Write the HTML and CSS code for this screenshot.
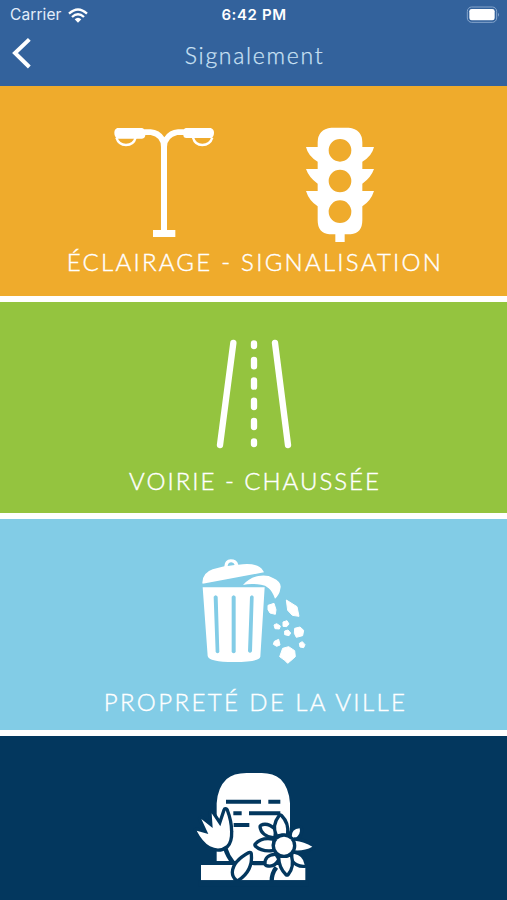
FILE: index.html
```html
<!DOCTYPE html>
<html lang="fr">
<head>
<meta charset="utf-8">
<title>Signalement</title>
<link rel="stylesheet" href="styles.css">
</head>
<body>
<header class="header">
  <div class="status">
    <div class="carrier"><span>Carrier</span>
      <svg class="wifi" viewBox="0 0 60 45" aria-hidden="true"><g fill="none" stroke="#fff" stroke-width="7"><path d="M3 17Q30-8 57 17"/><path d="M12 27Q30 10 48 27"/></g><path d="M20 34Q30 25 40 34L30 44Z" fill="#fff"/></svg>
    </div>
    <div class="time">6:42 PM</div>
    <svg class="battery" viewBox="0 0 102 54" aria-hidden="true"><rect x="4" y="3" width="88" height="46" rx="13" fill="none" stroke="#86a5cc" stroke-width="3"/><rect x="10" y="9" width="76" height="34" rx="7" fill="#fff"/><path d="M96 20Q102 26 96 32Z" fill="#86a5cc"/></svg>
  </div>
  <nav class="nav">
    <svg class="back" viewBox="0 0 60 96" aria-hidden="true"><path d="M52 7L9 48L52 90" fill="none" stroke="#fff" stroke-width="12"/></svg>
    <h1 class="title">Signalement</h1>
  </nav>
</header>
<main class="list">
  <section class="card lighting">
    <div class="icons">
      <svg class="lamp" viewBox="0 0 390 390" aria-hidden="true"><g fill="#fff"><path d="M52 39H124Q130 39 132 43H152Q179 45 193 67Q207 45 234 43H252Q254 39 260 39H332Q342 42 342 53Q342 65 334 69H259Q250 69 250 60H232Q201 68 201 96V345H226V366H159V345H183V96Q183 66 152 60H136Q136 69 126 71H52Q43 65 43 53Q43 42 52 39Z"/></g><g fill="none" stroke="#fff" stroke-width="7"><path d="M49 68Q56 90 78 90Q101 90 107 68"/><path d="M279 68Q285 90 307 90Q330 90 337 68"/></g></svg>
      <svg class="signal" viewBox="0 0 300 405" aria-hidden="true"><path fill="#fff" fill-rule="evenodd" d="M124 38H176Q217 43 217 82V96H252Q246 123 217 140V162H252Q243 188 217 206V228H252Q243 257 217 274V316Q217 355 182 358H164V381H136V358H118Q83 355 83 316V274Q57 257 48 228H83V206Q57 188 48 162H83V140Q54 123 48 96H83V82Q83 43 124 38ZM184 106A34 34 0 1 0 116 106A34 34 0 1 0 184 106ZM184 198A34 34 0 1 0 116 198A34 34 0 1 0 184 198ZM184 290A34 34 0 1 0 116 290A34 34 0 1 0 184 290Z"/></svg>
    </div>
    <h2 class="label">ÉCLAIRAGE - SIGNALISATION</h2>
  </section>
  <section class="card road">
    <svg class="lanes" viewBox="0 0 330 375" aria-hidden="true"><g fill="none" stroke="#fff" stroke-width="19" stroke-linecap="round"><path d="M100 39L60 345M225 39L264 345"/><path d="M162 40V48M162 90V109M162 151V170M162 212V231M162 273V291M162 334V342"/></g></svg>
    <h2 class="label">VOIRIE - CHAUSSÉE</h2>
  </section>
  <section class="card clean">
    <svg class="bin" viewBox="0 0 390 360" aria-hidden="true"><g fill="#fff"><path fill-rule="evenodd" d="M38 112H224L211 320Q207 336 132 336Q57 336 53 318ZM71 140L77 306Q83 314 88 306L83 140Q77 131 71 140ZM125 140V306Q131 314 137 306V140Q131 131 125 140ZM180 140L174 304Q180 313 186 304L191 140Q186 131 180 140Z"/><path d="M37 98Q38 68 68 58L103 49Q104 29 122 28Q141 28 145 44Q182 39 202 47Q217 54 222 67L38 101ZM113 48L134 45Q132 37 124 37Q114 38 113 48Z" fill-rule="evenodd"/><path d="M159 105Q178 83 205 78Q233 74 249 84Q277 97 271 116Q269 133 255 146Q247 124 236 115Q226 105 213 104Q181 99 159 105Z"/></g><path fill="#fff" stroke="#fff" stroke-width="3" stroke-linejoin="round" d="M234 166L252 160L258 179L256 193L240 189L234 179ZM289 150L321 170L327 199L307 196L293 181ZM279 216L291 212L297 222L290 230L279 229ZM252 225L260 221L271 228L268 237L255 236ZM284 243L294 240L302 249L297 257L284 254ZM314 235L330 231L341 241L338 257L319 262L313 250ZM253 274L266 268L270 285L260 289L250 283ZM328 280L337 275L345 284L341 293L330 291ZM278 295L296 290L314 302L316 320L306 329L293 340L284 331L269 320Z"/></svg>
    <h2 class="label">PROPRETÉ DE LA VILLE</h2>
  </section>
  <section class="card green-space">
    <svg class="flowers" viewBox="0 0 420 405" aria-hidden="true">
      <path fill="#fff" d="M95 288V115Q98 67 125 42Q145 24 185 24H230Q265 24 287 43Q312 68 315 115V288ZM48 300H361V346H48Z"/>
      <path d="M123 110H228M250 110H286M145 145H170M192 145H286M146 180H193M205 295H240" fill="none" stroke="#03375e" stroke-width="12"/>
      <path d="M120 248Q128 274 144 293M274 307Q260 325 260 348" fill="none" stroke="#03375e" stroke-width="13"/>
      <path class="petal" d="M35 197L70 207L49 162L83 189L80 145L106 184L122 136Q135 170 135 200Q136 228 124 241Q103 258 75 244Q52 230 35 197Z"/>
      <path class="petal" d="M194 267Q148 292 147 322Q147 334 157 342Q199 315 194 267Z"/>
      <path class="petal" d="M265 213Q233 208 230 185Q246 177 267 196Z"/>
      <path class="petal" d="M320 216Q319 192 344 190Q349 207 329 222Z"/>
      <path class="petal" d="M270 273Q243 275 245 297Q266 303 276 283Z"/>
      <path class="petal" d="M326 266Q354 270 359 299Q337 301 323 282Z"/>
      <path class="petal" d="M278 208Q266 181 286 155Q307 176 303 207Q290 204 278 208Z"/>
      <path class="petal" d="M262 227Q230 222 215 240Q231 255 262 252Q258 240 262 227Z"/>
      <path class="petal" d="M329 227Q358 230 382 245Q359 258 329 256Q333 241 329 227Z"/>
      <path class="petal" d="M286 278Q287 306 306 325Q323 304 315 275Q300 281 286 278Z"/>
      <circle class="petal" cx="297" cy="242" r="27"/>
      <path fill="#03375e" d="M40 346H370V365H40Z"/>
    </svg>
  </section>
</main>
</body>
</html>
```
FILE: styles.css
```css
* { box-sizing: border-box; }
body { margin: 0; height: 900px; overflow: hidden; background: #fff; font-family: Lato, "Liberation Sans", sans-serif; color: #fff; }
svg { display: block; flex: none; }
.header { height: 86px; background: #33629c; }
.status { height: 30px; padding: 0 7px 0 10px; display: grid; grid-template-columns: 1fr auto 1fr; align-items: center; font-family: Inter, sans-serif; font-size: 15.5px; line-height: 30px; }
.carrier { display: flex; gap: 6px; align-items: center; color: #e2edfa; letter-spacing: 0.1px; }
.wifi { width: 20px; height: 15px; }
.time { font-weight: 600; font-size: 15px; letter-spacing: 0.6px; margin-right: 2px; }
.battery { width: 34px; height: 18px; justify-self: end; }
.nav { height: 56px; display: grid; grid-template-columns: 1fr auto 1fr; padding-left: 12px; padding-right: 10px; }
.back { width: 20px; height: 32px; margin-top: 7px; }
.title { margin: 10px 0 0; font-size: 23px; line-height: 30px; font-weight: 300; letter-spacing: 1.7px; color: #cce2f5; -webkit-text-stroke: 0.25px; }
.list { height: 814px; overflow: hidden; display: flex; flex-direction: column; gap: 6px; }
.card { height: 211px; display: flex; flex-direction: column; align-items: center; flex: none; }
.lighting { height: 210px; background: #efab2c; padding-top: 29px; }
.road { background: #94c43f; padding-top: 28px; }
.clean { background: #82cce6; padding-top: 31px; }
.green-space { height: 164px; background: #03375e; padding-top: 29px; }
.icons { display: flex; gap: 60px; height: 135px; margin-right: 17px; }
.lamp { width: 130px; height: 130px; }
.signal { width: 100px; height: 135px; }
.lanes { width: 110px; height: 125px; margin-right: -3px; }
.bin { width: 130px; height: 120px; margin-left: 3px; }
.flowers { width: 140px; height: 135px; margin-left: 3px; }
.petal { fill: #fff; stroke: #03375e; stroke-width: 20px; stroke-linejoin: round; paint-order: stroke; }
.label { margin: 0; font-size: 24px; line-height: 30px; font-weight: 300; white-space: nowrap; -webkit-text-stroke: 0.4px #fff; }
.lighting .label { letter-spacing: 2.25px; margin-top: -3px; padding-left: 3px; }
.road .label { letter-spacing: 2px; margin-top: 11px; padding-left: 3px; }
.clean .label { letter-spacing: 2.4px; margin-top: 17px; padding-left: 4px; }
```
